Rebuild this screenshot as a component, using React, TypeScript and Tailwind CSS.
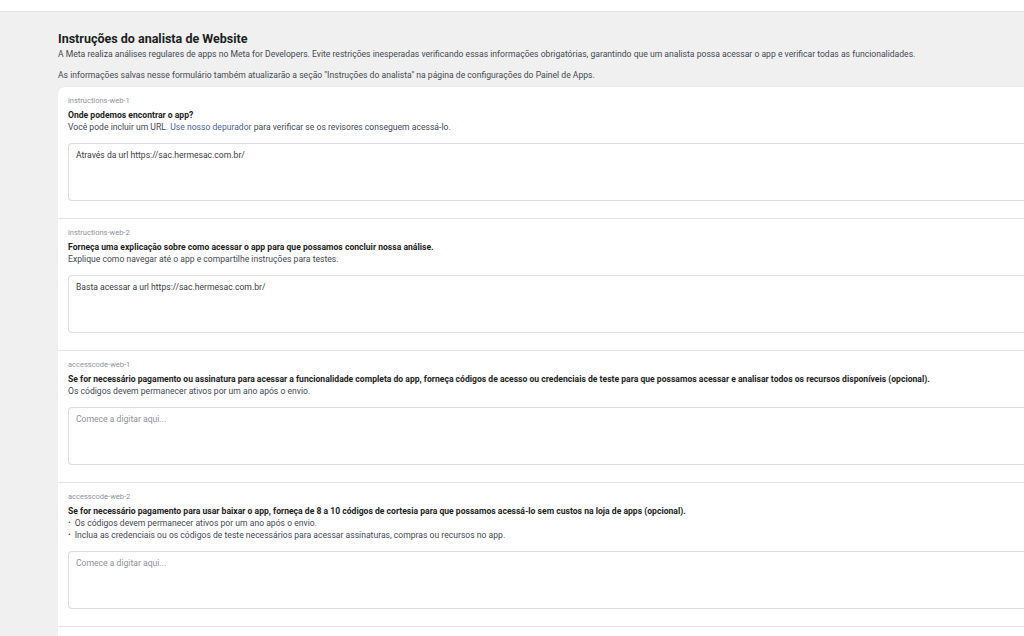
import React from 'react';

type Field = {
  id: string;
  title: string;
  desc?: React.ReactNode;
  bullets?: string[];
  value?: string;
};

const fields: Field[] = [
  {
    id: 'instructions-web-1',
    title: 'Onde podemos encontrar o app?',
    desc: (
      <>
        Você pode incluir um URL. <span className="text-[#4b5f9c]">Use nosso depurador</span> para verificar se os revisores conseguem acessá-lo.
      </>
    ),
    value: 'Através da url https://sac.hermesac.com.br/',
  },
  {
    id: 'instructions-web-2',
    title: 'Forneça uma explicação sobre como acessar o app para que possamos concluir nossa análise.',
    desc: 'Explique como navegar até o app e compartilhe instruções para testes.',
    value: 'Basta acessar a url https://sac.hermesac.com.br/',
  },
  {
    id: 'accesscode-web-1',
    title:
      'Se for necessário pagamento ou assinatura para acessar a funcionalidade completa do app, forneça códigos de acesso ou credenciais de teste para que possamos acessar e analisar todos os recursos disponíveis (opcional).',
    desc: 'Os códigos devem permanecer ativos por um ano após o envio.',
  },
  {
    id: 'accesscode-web-2',
    title:
      'Se for necessário pagamento para usar baixar o app, forneça de 8 a 10 códigos de cortesia para que possamos acessá-lo sem custos na loja de apps (opcional).',
    bullets: [
      'Os códigos devem permanecer ativos por um ano após o envio.',
      'Inclua as credenciais ou os códigos de teste necessários para acessar assinaturas, compras ou recursos no app.',
    ],
  },
];

function FieldRow({ f }: { f: Field }) {
  return (
    <div className="border-b border-[#e4e4e4] pl-[10px] pt-[8px] pb-[17px]">
      <p className="text-[7.5px] leading-[12px] text-[#90949c]">{f.id}</p>
      <p className="mt-[2px] text-[8.6px] font-bold leading-[12px] text-[#1c1e21]">{f.title}</p>
      {f.desc && <p className="text-[8.6px] leading-[12px] text-[#444950]">{f.desc}</p>}
      {f.bullets && (
        <ul className="text-[8.6px] leading-[12px] text-[#444950]">
          {f.bullets.map((b) => (
            <li key={b} className="flex gap-[4px]">
              <span className="text-[8px]">•</span>
              <span>{b}</span>
            </li>
          ))}
        </ul>
      )}
      <div className="mt-[10px] h-[58px] rounded-l-[4px] border border-r-0 border-[#dadde1] bg-white px-[7px] py-[5px] text-[8.6px] leading-[13px]">
        {f.value ? (
          <span className="text-[#3a3d42]">{f.value}</span>
        ) : (
          <span className="text-[#8d9096]">Comece a digitar aqui...</span>
        )}
      </div>
    </div>
  );
}

export default function App() {
  return (
    <div
      className="h-[636px] w-[1024px] overflow-hidden bg-[#f0f0f0]"
      style={{ fontFamily: 'Roboto, "Liberation Sans", sans-serif' }}
    >
      <div className="h-[12px] border-b border-[#e2e2e2] bg-white" />
      <div className="pl-[58px] pt-[18px]">
        <h1 className="text-[12.5px] font-bold leading-[17px] text-[#1c1e21]">Instruções do analista de Website</h1>
        <p className="mt-[1px] text-[8.6px] leading-[13px] text-[#444950]">
          A Meta realiza análises regulares de apps no Meta for Developers. Evite restrições inesperadas verificando essas informações obrigatórias, garantindo que um analista possa acessar o app e verificar todas as funcionalidades.
        </p>
        <p className="mt-[8px] text-[8.6px] leading-[13px] text-[#444950]">
          As informações salvas nesse formulário também atualizarão a seção "Instruções do analista" na página de configurações do Painel de Apps.
        </p>
        <div className="mt-[5px] rounded-tl-[6px] bg-white shadow-[0_0_1px_rgba(0,0,0,0.15)]">
          {fields.map((f) => (
            <FieldRow key={f.id} f={f} />
          ))}
          <div className="h-[40px]" />
        </div>
      </div>
    </div>
  );
}
